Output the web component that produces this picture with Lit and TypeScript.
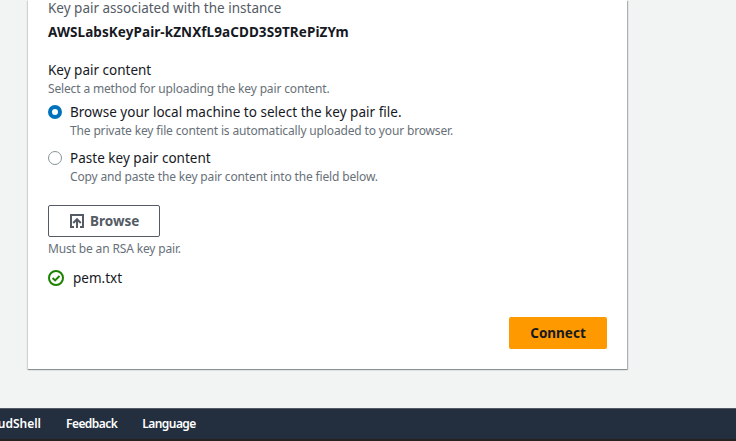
import { LitElement, html, css, svg } from "lit";
import { customElement, property } from "lit/decorators.js";

@customElement("radio-option")
class RadioOption extends LitElement {
  @property() label = "";
  @property() description = "";
  @property({ type: Boolean, reflect: true }) checked = false;

  static styles = css`
    :host {
      display: grid;
      grid-template-columns: 14px 1fr;
      column-gap: 8px;
      color: #16191f;
    }
    .dot {
      box-sizing: border-box;
      width: 14px;
      height: 14px;
      margin-top: 4px;
      border: 1px solid #879596;
      border-radius: 50%;
      background: #fff;
    }
    :host([checked]) .dot {
      border: 4px solid #0073bb;
    }
    .label {
      font-size: 13.5px;
      line-height: 22px;
      letter-spacing: 0.02px;
    }
    .description {
      font-size: 12px;
      line-height: 16px;
      letter-spacing: -0.15px;
      color: #687078;
    }
    .text {
      white-space: nowrap;
    }
  `;

  render() {
    return html`
      <span class="dot"></span>
      <div class="text">
        <div class="label">${this.label}</div>
        <div class="description">${this.description}</div>
      </div>
    `;
  }
}

const uploadIcon = svg`
  <path d="M4 13H1V1h12v12h-3" />
  <path d="M7 14V5.4M3.2 9 7 5.2 10.8 9" />
`;

@customElement("app-root")
class AppRoot extends LitElement {
  static styles = css`
    :host {
      display: flex;
      flex-direction: column;
      height: 441px;
      overflow: hidden;
      background: #f2f3f3;
      color: #16191f;
      font-family: "Noto Sans", "Open Sans", sans-serif;
      font-size: 13.5px;
      line-height: 22px;
      white-space: nowrap;
    }
    .page {
      height: 408px;
    }
    .card {
      box-sizing: border-box;
      width: 599px;
      height: 369px;
      margin-left: 28px;
      padding: 0 20px;
      background: #fff;
      box-shadow: 0 1px 0 0 #879596, 1px 1px 1px 0 rgba(0, 28, 36, 0.3),
        -1px 1px 1px 0 rgba(0, 28, 36, 0.15);
      display: flex;
      flex-direction: column;
      align-items: flex-start;
    }
    .term {
      margin-top: -3px;
      color: #545b64;
    }
    .value {
      margin-top: 2px;
      font-weight: 700;
      letter-spacing: 0.08px;
    }
    .heading {
      margin-top: 16px;
    }
    .hint {
      font-size: 12px;
      line-height: 16px;
      letter-spacing: -0.15px;
      color: #687078;
    }
    .heading + .hint {
      margin-bottom: 4px;
    }
    radio-option {
      margin-bottom: 8px;
    }
    .browse {
      box-sizing: border-box;
      display: flex;
      align-items: center;
      width: 112px;
      height: 32px;
      margin-top: 12px;
      margin-bottom: 4px;
      padding: 0 0 0 21px;
      border: 1px solid #545b64;
      border-radius: 2px;
      background: #fff;
      color: #545b64;
      font: inherit;
      font-weight: 700;
      gap: 6px;
    }
    svg {
      display: block;
      flex: none;
      fill: none;
    }
    .browse svg {
      stroke: #545b64;
      stroke-width: 2;
    }
    .file {
      display: flex;
      align-items: center;
      gap: 9px;
      margin-top: 10px;
    }
    .file svg {
      stroke: #1d8102;
      stroke-width: 2;
    }
    .connect {
      width: 98px;
      height: 32px;
      margin: 28px 0 0 auto;
      padding: 0;
      border: 0;
      border-radius: 2px;
      background: #ff9900;
      color: #16191f;
      font: inherit;
      font-weight: 700;
    }
    footer {
      box-sizing: border-box;
      height: 31px;
      border-top: 1px solid #545b64;
      background: #232f3e;
      color: #fff;
      display: flex;
      align-items: center;
      gap: 25px;
      font-size: 12px;
      font-weight: 600;
      letter-spacing: -0.55px;
    }
    .shell {
      display: flex;
      justify-content: flex-end;
      width: 41px;
      letter-spacing: 0;
    }
    .edge {
      height: 2px;
      background: #262220;
    }
  `;

  render() {
    return html`
      <div class="page">
        <section class="card">
          <div class="term">Key pair associated with the instance</div>
          <div class="value">AWSLabsKeyPair-kZNXfL9aCDD3S9TRePiZYm</div>
          <div class="heading">Key pair content</div>
          <div class="hint">Select a method for uploading the key pair content.</div>
          <radio-option
            checked
            label="Browse your local machine to select the key pair file."
            description="The private key file content is automatically uploaded to your browser."
          ></radio-option>
          <radio-option
            label="Paste key pair content"
            description="Copy and paste the key pair content into the field below."
          ></radio-option>
          <button class="browse">
            <svg width="14" height="14" viewBox="0 0 14 14">${uploadIcon}</svg>
            <span>Browse</span>
          </button>
          <div class="hint">Must be an RSA key pair.</div>
          <div class="file">
            <svg width="16" height="16" viewBox="0 0 16 16">
              <circle cx="8" cy="8" r="7" />
              <path d="m4.6 8 2.5 2.4 4.4-4.4" />
            </svg>
            <span class="name">pem.txt</span>
          </div>
          <button class="connect">Connect</button>
        </section>
      </div>
      <footer>
        <span class="shell">CloudShell</span>
        <span>Feedback</span>
        <span>Language</span>
      </footer>
      <div class="edge"></div>
    `;
  }
}
